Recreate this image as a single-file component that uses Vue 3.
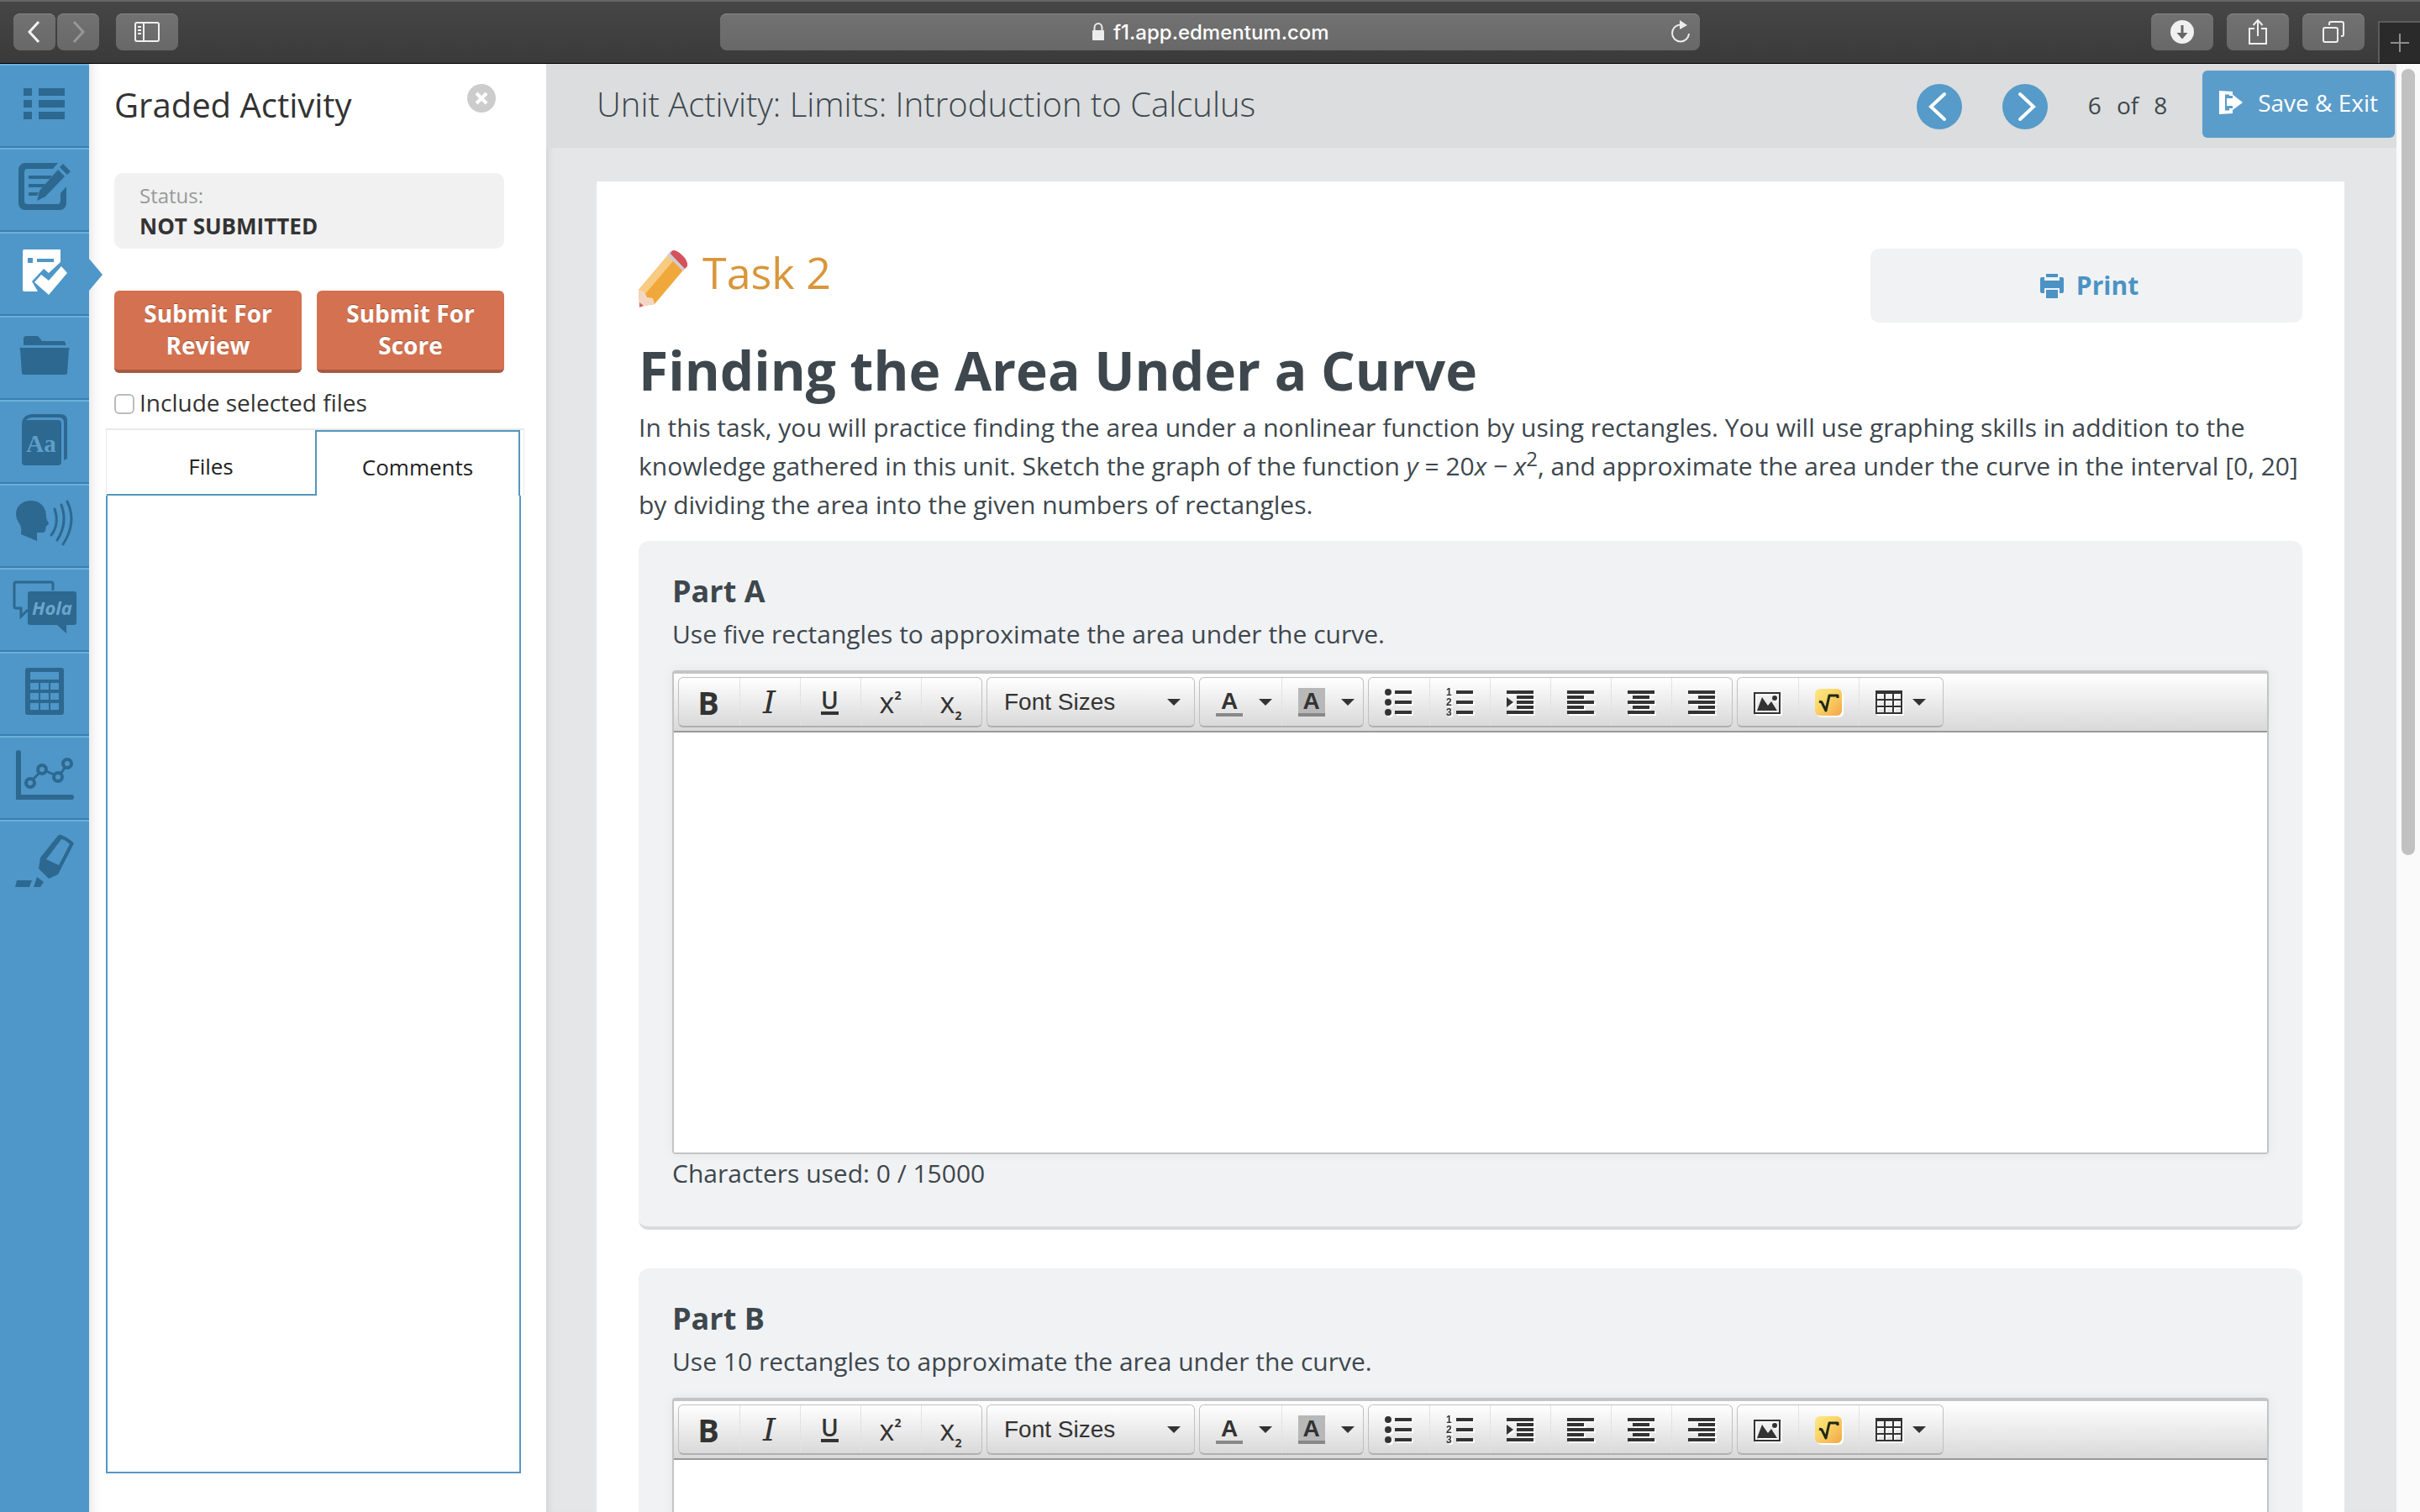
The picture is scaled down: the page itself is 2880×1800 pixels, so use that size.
<script setup>
import { ref } from 'vue'

const address = ref('f1.app.edmentum.com')
const includeFiles = ref(false)
const tools = [
  { id: 'contents', label: 'Contents' },
  { id: 'notes', label: 'Notes' },
  { id: 'graded', label: 'Graded Activity', active: true },
  { id: 'files', label: 'Files' },
  { id: 'dictionary', label: 'Dictionary' },
  { id: 'speech', label: 'Text to Speech' },
  { id: 'translate', label: 'Translate' },
  { id: 'calculator', label: 'Calculator' },
  { id: 'graph', label: 'Graph' },
  { id: 'highlighter', label: 'Highlighter' },
]
const parts = ref([
  { name: 'Part A', prompt: 'Use five rectangles to approximate the area under the curve.', answer: '' },
  { name: 'Part B', prompt: 'Use 10 rectangles to approximate the area under the curve.', answer: '' },
])
const listTools = [
  { label: 'Bullet list', d: 'M6 1h10v2H6zM6 7h10v2H6zM6 13h10v2H6zM2 0a2 2 0 1 1 0 4a2 2 0 1 1 0-4M2 6a2 2 0 1 1 0 4a2 2 0 1 1 0-4M2 12a2 2 0 1 1 0 4a2 2 0 1 1 0-4' },
  { label: 'Numbered list', d: 'M6 1h10v2H6zM6 7h10v2H6zM6 13h10v2H6z', numbers: true },
  { label: 'Increase indent', d: 'M0 1h16v2H0zM6 4h10v2H6zM6 7h10v2H6zM6 10h10v2H6zM0 13h16v2H0zM0 5l4 3l-4 3z' },
  { label: 'Align left', d: 'M0 1h16v2H0zM0 4h10v2H0zM0 7h16v2H0zM0 10h10v2H0zM0 13h16v2H0z' },
  { label: 'Align center', d: 'M0 1h16v2H0zM3 4h10v2H3zM0 7h16v2H0zM3 10h10v2H3zM0 13h16v2H0z' },
  { label: 'Align right', d: 'M0 1h16v2H0zM6 4h10v2H6zM0 7h16v2H0zM6 10h10v2H6zM0 13h16v2H0z' },
]
</script>

<template>
  <div class="window">
    <header class="browser-bar">
      <div class="history">
        <button class="chrome-btn small" aria-label="Back">
          <svg width="20" height="30" viewBox="0 0 20 30"><path d="M15 3L4 15l11 12" fill="none" stroke="#f2f2f2" stroke-width="3" /></svg>
        </button>
        <button class="chrome-btn small" aria-label="Forward">
          <svg width="20" height="30" viewBox="0 0 20 30"><path d="M5 3l11 12L5 27" fill="none" stroke="#979797" stroke-width="3" /></svg>
        </button>
      </div>
      <button class="chrome-btn" aria-label="Sidebar">
        <svg width="30" height="24" viewBox="0 0 30 24" fill="none" stroke="#f0f0f0" stroke-width="2">
          <rect x="1" y="1" width="28" height="22" rx="2" /><path d="M11 1v22M4 6h4M4 10h4M4 14h4" />
        </svg>
      </button>
      <div class="address">
        <svg class="lock" width="16" height="24" viewBox="0 0 16 24"><path d="M3.500 12V7a4.500 5 0 0 1 9 0v5" fill="none" stroke="#ececec" stroke-width="2" /><rect x="1" y="10" width="14" height="12" rx="1" fill="#ececec" /></svg>
        <input v-model="address" class="url" aria-label="Address" />
        <button class="reload" aria-label="Reload">
          <svg width="26" height="30" viewBox="0 0 26 30"><path d="M12 6.500A10 10 0 1 0 23 17" fill="none" stroke="#ececec" stroke-width="2" /><path d="M12 1l9 6l-9 5z" fill="#ececec" /></svg>
        </button>
      </div>
      <div class="chrome-actions">
        <button class="chrome-btn" aria-label="Downloads">
          <svg width="30" height="30" viewBox="0 0 30 30"><circle cx="15" cy="15" r="14" fill="#f0f0f0" /><path d="M13.500 7h3v9h5L15 23.500L8.500 16h5z" fill="#666" /></svg>
        </button>
        <button class="chrome-btn" aria-label="Share">
          <svg width="24" height="32" viewBox="0 0 24 32" fill="none" stroke="#f0f0f0" stroke-width="2"><path d="M8 12H2v18h20V12h-6M12 21V2M6.500 8L12 2l5.500 6" /></svg>
        </button>
        <button class="chrome-btn" aria-label="Show tabs">
          <svg width="26" height="26" viewBox="0 0 26 26" fill="none" stroke="#f0f0f0" stroke-width="2"><rect x="1" y="8" width="17" height="17" rx="2" /><path d="M8 5V3a2 2 0 0 1 2-2h13a2 2 0 0 1 2 2v13a2 2 0 0 1-2 2h-1" /></svg>
        </button>
      </div>
      <button class="new-tab" aria-label="New tab">
        <svg width="24" height="24" viewBox="0 0 24 24"><path d="M12 1v22M1 12h22" stroke="#8d8d8d" stroke-width="2" /></svg>
      </button>
    </header>

    <div class="workspace">
      <nav class="rail" aria-label="Tools">
        <button v-for="tool in tools" :key="tool.id" class="rail-item" :class="{ active: tool.active }" :aria-label="tool.label">
          <svg width="106" height="96" viewBox="0 2 106 96" fill="currentColor">
            <g v-if="tool.id === 'contents'">
              <path d="M28 29h10v9H28zM46 29h31v9H46zM28 43h10v9H28zM46 43h31v9H46zM28 57h10v9H28zM46 57h31v9H46z" />
            </g>
            <g v-else-if="tool.id === 'notes'">
              <path d="M69 18H30a8 8 0 0 0-8 8v40a8 8 0 0 0 8 8h41a8 8 0 0 0 8-8V46l-7 8v9a4 4 0 0 1-4 4H33a4 4 0 0 1-4-4V29a4 4 0 0 1 4-4h30z" />
              <path d="M34 33h28l-3 4H34zM34 43h20l-3 4H34zM34 53h12l-2 4H34z" />
              <path d="M47 51L69 26l8 8L54 58l-10 5zM71 23l4-4l9 9l-4 4z" />
            </g>
            <g v-else-if="tool.id === 'graded'">
              <path d="M29 21h43v15L58 49l-6-5l-14 15l7 12H29a2 2 0 0 1-2-2V23a2 2 0 0 1 2-2z" />
              <path d="M33 31h6v6h-6zM44 32h20v4H44z" fill="#4e97c8" />
              <path d="M41 60l8-9l9 7l15-17l7 8l-22 26z" />
            </g>
            <g v-else-if="tool.id === 'files'">
              <path d="M30 24h15l5 6h25a3 3 0 0 1 3 3v2H28v-9zM25 38h56a1 1 0 0 1 1 2l-2 28a2 2 0 0 1-2 2H28a2 2 0 0 1-2-2l-2-28a1 1 0 0 1 1-2z" />
            </g>
            <g v-else-if="tool.id === 'dictionary'">
              <path d="M26 30q0-12 12-13h34q8 0 8 8v45l-4 2V27q0-6-6-6H40q-6 0-9 3h38q4 0 4 4v46q0 4-4 4H30q-4 0-4-4z" />
              <text x="49" y="62" class="book-text">Aa</text>
            </g>
            <g v-else-if="tool.id === 'speech'">
              <path d="M37 20c12 0 18 9 18 19c0 3 2 6 3 8q0 2-3 3c-1 4 0 7-4 8h-7v10L25 60q1-7-1-11c-3-5-5-8-5-13c0-10 8-16 18-16z" />
              <path d="M65 30q6 18-4 31M73 25q8 22-5 42M80 21q12 25-5 51" fill="none" stroke="currentColor" stroke-width="3" stroke-linecap="round" />
            </g>
            <g v-else-if="tool.id === 'translate'">
              <path d="M63 27V19q0-2-2-2H19q-2 0-2 2v27q0 2 2 2h6v10l8-8" fill="none" stroke="currentColor" stroke-width="3" />
              <path d="M36 28h52q3 0 3 3v34q0 3-3 3h-9v10L68 68H36q-3 0-3-3V31q0-3 3-3z" />
              <text x="62" y="56" class="hola-text">Hola</text>
            </g>
            <g v-else-if="tool.id === 'calculator'">
              <path fill-rule="evenodd" d="M33 19h40q3 0 3 3v50q0 3-3 3H33q-3 0-3-3V22q0-3 3-3zM36 24v9h34v-9zM36 37v8h10v-8zM48 37v8h10v-8zM60 37v8h10v-8zM36 49v8h10v-8zM48 49v8h10v-8zM60 49v8h10v-8zM36 61v8h10v-8zM48 61v8h10v-8zM60 61v8h10v-8z" />
            </g>
            <g v-else-if="tool.id === 'graph'" fill="none" stroke="currentColor">
              <path d="M22 20v53h63" stroke-width="6" stroke-linecap="round" />
              <path d="M39 52l8-8M55 42l9 4M73 44l4-6" stroke-width="3" />
              <circle v-for="point in [[36, 56], [50, 40], [69, 49], [80, 33]]" :key="point[0]" :cx="point[0]" :cy="point[1]" r="5" stroke-width="4" />
            </g>
            <g v-else>
              <path d="M73 17q8 3 15 10L69 64l-11 5l-12-12l2-13L68 19q2-3 5-2zM73 22L55 46l15 7l13-25q-5-5-10-6z" fill-rule="evenodd" />
              <path d="M44 67l8 6l-4 6h-8zM20 71h18l-3 8H18z" />
            </g>
          </svg>
        </button>
      </nav>

      <aside class="panel">
        <div class="panel-head">
          <h2>Graded Activity</h2>
          <button class="close" aria-label="Close">
            <svg width="34" height="34" viewBox="0 0 34 34"><circle cx="17" cy="17" r="17" fill="#ccc" /><path d="M11 11l12 12M23 11L11 23" stroke="#fff" stroke-width="4" /></svg>
          </button>
        </div>
        <div class="status">
          <span class="status-label">Status:</span>
          <strong>NOT SUBMITTED</strong>
        </div>
        <div class="submit-row">
          <button>Submit For Review</button>
          <button>Submit For Score</button>
        </div>
        <label class="include"><input v-model="includeFiles" type="checkbox" /> Include selected files</label>
        <div class="tabs" role="tablist">
          <button class="tab" role="tab">Files</button>
          <button class="tab selected" role="tab" aria-selected="true">Comments</button>
        </div>
        <div class="tab-body" role="tabpanel"></div>
      </aside>

      <main class="content">
        <div class="activity-bar">
          <h1>Unit Activity: Limits: Introduction to Calculus</h1>
          <div class="pager">
            <button aria-label="Previous"><svg width="54" height="54" viewBox="0 0 54 54"><path d="M33 12L17 27l16 15" fill="none" stroke="#fff" stroke-width="4" stroke-linecap="round" /></svg></button>
            <button aria-label="Next"><svg width="54" height="54" viewBox="0 0 54 54"><path d="M21 12l16 15l-16 15" fill="none" stroke="#fff" stroke-width="4" stroke-linecap="round" /></svg></button>
            <span class="count"><span>6</span><span>of</span><span>8</span></span>
          </div>
          <button class="save">
            <svg width="28" height="28" viewBox="0 0 28 28" fill="#fff"><path d="M0 0l16 1v5h-4V4.500H7v19h5V21h4v6L0 28z" /><path d="M9 9h7V4.500L28 14L16 23v-5H9z" /></svg>
            Save &amp; Exit
          </button>
        </div>

        <article class="page">
          <div class="task-row">
            <div class="task">
              <svg width="58" height="68" viewBox="0 0 58 68">
                <path d="M0 47L38 2l19 17L19 64L1 67z" fill="#f1a83a" />
                <path d="M0 47L38 2l7 6L7 53z" fill="#f8cb83" />
                <path d="M0 47l7 3l3 6l7 1l2 7L1 67z" fill="#f3d7c4" />
                <path d="M34 6l4-5l20 17l-5 7z" fill="#cfcdd2" />
                <path d="M39 1q4-3 12 4t7 14l-3 3L38 4z" fill="#d4525a" />
                <path d="M1 62l5 4l-5 2z" fill="#cf6670" />
              </svg>
              <h3>Task 2</h3>
            </div>
            <button class="print">
              <svg width="30" height="30" viewBox="0 0 30 30" fill="#4b93c4"><path d="M8 1h14v4H8zM3 5h3v4h18V5h3q2 0 2 2v15q0 2-2 2h-3v-6H6v6H3q-2 0-2-2V7q0-2 2-2zM8 20h14v10H8z" /></svg>
              Print
            </button>
          </div>
          <h2 class="title">Finding the Area Under a Curve</h2>
          <p class="intro">In this task, you will practice finding the area under a nonlinear function by using rectangles. You will use graphing skills in addition to the knowledge gathered in this unit. Sketch the graph of the function <em>y</em> = 20<em>x</em> − <em>x</em><sup>2</sup>, and approximate the area under the curve in the interval [0, 20] by dividing the area into the given numbers of rectangles.</p>

          <section v-for="part in parts" :key="part.name" class="part">
            <h3>{{ part.name }}</h3>
            <p>{{ part.prompt }}</p>
            <div class="editor">
              <div class="toolbar">
                <div class="group">
                  <button aria-label="Bold"><b class="bold">B</b></button>
                  <button aria-label="Italic"><i class="italic">I</i></button>
                  <button aria-label="Underline"><span class="underline">U</span></button>
                  <button aria-label="Superscript"><span class="script">x<sup>2</sup></span></button>
                  <button aria-label="Subscript"><span class="script">x<sub>2</sub></span></button>
                </div>
                <div class="group sizes">
                  <select aria-label="Font Sizes"><option>Font Sizes</option></select>
                  <span class="caret"></span>
                </div>
                <div class="group colors">
                  <button aria-label="Text color"><span class="letter">A</span><span class="caret"></span></button>
                  <button aria-label="Background color"><span class="letter filled">A</span><span class="caret"></span></button>
                </div>
                <div class="group">
                  <button v-for="item in listTools" :key="item.label" :aria-label="item.label">
                    <svg width="32" height="32" viewBox="0 0 16 16" fill="#333">
                      <path :d="item.d" />
                      <g v-if="item.numbers" class="numbers"><text x="0" y="4">1</text><text x="0" y="10">2</text><text x="0" y="16">3</text></g>
                    </svg>
                  </button>
                </div>
                <div class="group">
                  <button aria-label="Insert image">
                    <svg width="32" height="32" viewBox="0 0 16 16" fill="#333"><path fill-rule="evenodd" d="M0 2h16v13H0zM1 3v11h14V3z" /><path d="M2 13l3-8l3.500 5l2-2.500L14 13z" /><circle cx="12.500" cy="5.500" r="1.500" /></svg>
                  </button>
                  <button aria-label="Insert equation">
                    <svg width="32" height="32" viewBox="0 0 32 32">
                      <defs><linearGradient id="equation-fill" x1="0" y1="0" x2="1" y2="1"><stop offset="0" stop-color="#fbe88c" /><stop offset="0.4" stop-color="#fbd768" /><stop offset="1" stop-color="#f2a548" /></linearGradient></defs>
                      <rect width="32" height="32" rx="6" fill="url(#equation-fill)" />
                      <path d="M5 15l3 1l5 10l4-18h10v3" fill="none" stroke="#1d2a14" stroke-width="3" stroke-linejoin="round" />
                    </svg>
                  </button>
                  <button class="table-btn" aria-label="Table">
                    <svg width="32" height="32" viewBox="0 0 16 16" fill="#333"><path fill-rule="evenodd" d="M0 1h16v14H0zM1 3v3h4V3zM6 3v3h4V3zM11 3v3h4V3zM1 7v3h4V7zM6 7v3h4V7zM11 7v3h4V7zM1 11v3h4v-3zM6 11v3h4v-3zM11 11v3h4v-3z" /></svg>
                    <span class="caret"></span>
                  </button>
                </div>
              </div>
              <textarea v-model="part.answer" :aria-label="part.name + ' answer'"></textarea>
            </div>
            <p class="used">Characters used: {{ part.answer.length }} / 15000</p>
          </section>
        </article>
      </main>

      <div class="scrollbar"><div class="thumb"></div></div>
    </div>
  </div>
</template>

<style>
body {
  margin: 0;
  background: #e5e6e8;
}
</style>

<style scoped>
* {
  box-sizing: border-box;
}
h1,
h2,
h3,
p {
  margin: 0;
}
button {
  margin: 0;
  padding: 0;
  border: 0;
  background: none;
  font: inherit;
  color: inherit;
}
svg {
  display: block;
  flex: none;
  overflow: visible;
}
.window {
  display: flex;
  flex-direction: column;
  height: 100vh;
  overflow: hidden;
  font-family: 'Open Sans', sans-serif;
  color: #3d474d;
}

/* browser chrome */
.browser-bar {
  display: grid;
  grid-template-columns: auto auto 1fr auto auto;
  align-items: start;
  flex: none;
  height: 76px;
  padding: 14px 0 0 16px;
  border-top: 2px solid #666;
  border-bottom: 1px solid #000;
  background: linear-gradient(#464646, #3a3a3a);
}
.history {
  display: flex;
  gap: 2px;
  margin-right: 20px;
}
.chrome-btn {
  display: flex;
  align-items: center;
  justify-content: center;
  width: 74px;
  height: 44px;
  border-radius: 8px;
  background: linear-gradient(#727272, #686868);
  box-shadow: inset 0 1px #858585;
}
.chrome-btn.small {
  width: 50px;
}
.address {
  display: flex;
  align-items: center;
  justify-self: center;
  justify-content: center;
  position: relative;
  width: 1166px;
  max-width: 100%;
  height: 44px;
  margin-left: 108px;
  border-radius: 8px;
  background: linear-gradient(#727272, #686868);
  box-shadow: inset 0 1px #858585;
}
.lock {
  margin-right: 10px;
}
.url {
  width: 256px;
  height: 34px;
  padding: 0;
  border: 0;
  background: none;
  font: 500 24px Inter, sans-serif;
  color: #fff;
}
.reload {
  position: absolute;
  top: 7px;
  right: 10px;
}
.chrome-actions {
  display: flex;
  gap: 16px;
}
.new-tab {
  display: flex;
  align-items: center;
  justify-content: center;
  align-self: end;
  width: 50px;
  height: 50px;
  margin-left: 16px;
  border: solid #5c5c5c;
  border-width: 2px 0 0 2px;
  background: #2a2a2a;
}

.workspace {
  display: flex;
  flex: 1;
  min-height: 0;
}

/* tool rail */
.rail {
  display: flex;
  flex-direction: column;
  flex: none;
  position: relative;
  z-index: 1;
  width: 106px;
  background: #4e97c8;
  color: #2d6890;
}
.rail-item {
  position: relative;
  height: 100px;
  border-top: 2px solid #6dafda;
  border-bottom: 2px solid #3a7fb0;
}
.rail-item:last-child {
  border-bottom: 0;
}
.rail-item.active {
  color: #fff;
}
.rail-item.active::after {
  content: '';
  position: absolute;
  top: 30px;
  left: 106px;
  border: solid transparent;
  border-width: 19px 0 19px 16px;
  border-left-color: #4e97c8;
}
.book-text {
  font: bold 29px 'Liberation Serif', serif;
  fill: #5e9fcb;
  text-anchor: middle;
}
.hola-text {
  font: italic bold 22px 'Open Sans', sans-serif;
  fill: #6aa5cd;
  text-anchor: middle;
}

/* graded activity panel */
.panel {
  display: flex;
  flex-direction: column;
  flex: none;
  width: 544px;
  padding: 20px 30px 46px 20px;
  background: #fff;
  box-shadow: inset 16px 0 14px -14px #dfdfe2;
  color: #333;
}
.panel-head {
  display: flex;
  justify-content: space-between;
  align-items: flex-start;
  margin: 0 30px 52px 10px;
}
.panel-head h2 {
  font-size: 40px;
  font-weight: 400;
  line-height: 58px;
}
.close {
  margin-top: 4px;
}
.status {
  display: flex;
  flex-direction: column;
  margin: 0 20px 50px 10px;
  padding: 9px 30px;
  border-radius: 10px;
  background: #f1f1f1;
  font-size: 26px;
  line-height: 36px;
}
.status-label {
  font-size: 24px;
  color: #999;
}
.submit-row {
  display: flex;
  gap: 18px;
  margin: 0 20px 16px 10px;
}
.submit-row button {
  flex: 1;
  padding: 8px 30px 10px;
  border-bottom: 4px solid #a85940;
  border-radius: 6px;
  background: #d37150;
  font-size: 28px;
  font-weight: 700;
  line-height: 38px;
  color: #fff;
  text-shadow: 0 -1px rgba(0, 0, 0, 0.3);
}
.include {
  display: flex;
  align-items: center;
  gap: 6px;
  margin: 0 0 12px 10px;
  font-size: 28px;
  line-height: 38px;
}
.include input {
  appearance: none;
  width: 24px;
  height: 24px;
  margin: 4px 0 0;
  border: 2px solid #bbb;
  border-radius: 6px;
  background: #fff;
}
.tabs {
  display: flex;
  flex: none;
  height: 80px;
  margin-right: -4px;
  padding-right: 4px;
  border: solid #e9e9e9;
  border-width: 2px 1px 0;
}
.tab {
  width: 248px;
  padding-top: 10px;
  border-bottom: 2px solid #5596bf;
  font-size: 26px;
  color: #222;
}
.tab.selected {
  flex: 1;
  padding-top: 8px;
  border: solid #5596bf;
  border-width: 2px 2px 0;
}
.tab-body {
  flex: 1;
  border: solid #5596c6;
  border-width: 0 2px 2px;
}

/* activity content */
.content {
  flex: 1;
  min-width: 0;
  overflow: hidden;
  background: #e5e6e8;
  box-shadow: inset 8px 0 8px -6px #cfd0d2;
}
.activity-bar {
  display: flex;
  align-items: center;
  height: 100px;
  padding: 0 2px 4px 60px;
  background: #dbddde;
}
.activity-bar h1 {
  flex: 1;
  font-size: 40px;
  font-weight: 300;
  line-height: 56px;
}
.pager {
  display: flex;
  align-items: center;
  gap: 48px;
  padding-top: 6px;
}
.pager button {
  border-radius: 50%;
  background: #569bc9;
}
.count {
  display: flex;
  gap: 18px;
  margin-right: 42px;
  padding-bottom: 4px;
  font-size: 28px;
  line-height: 38px;
}
.save {
  display: flex;
  align-items: center;
  gap: 18px;
  height: 80px;
  padding: 0 20px 4px 20px;
  border-radius: 6px;
  background: #5b9dca;
  font-size: 28px;
  color: #fff;
}
.page {
  margin: 40px 62px 0 60px;
  padding: 80px 50px 0;
  background: #fff;
  font-size: 30px;
  line-height: 46px;
}
.task-row {
  display: flex;
  justify-content: space-between;
  align-items: flex-start;
  margin-bottom: 18px;
}
.task {
  display: flex;
  align-items: flex-start;
  gap: 18px;
}
.task svg {
  margin-top: 2px;
}
.task h3 {
  font-size: 52px;
  font-weight: 400;
  line-height: 56px;
  color: #d9963a;
}
.print {
  display: flex;
  align-items: center;
  justify-content: center;
  gap: 14px;
  width: 514px;
  height: 88px;
  padding-left: 6px;
  border-radius: 10px;
  background: #f1f2f4;
  font-weight: 700;
  color: #4b93c4;
}
.title {
  margin-bottom: 6px;
  font-size: 64px;
  font-weight: 700;
  line-height: 78px;
}
.intro {
  margin-bottom: 20px;
}
.intro sup {
  font-size: 24px;
  line-height: 0;
}
.part {
  margin-bottom: 46px;
  padding: 36px 40px 40px;
  border-bottom: 4px solid #d8dcdc;
  border-radius: 12px;
  background: #f1f2f4;
}
.part h3 {
  margin-bottom: 4px;
  font-size: 36px;
  font-weight: 700;
  line-height: 48px;
}

/* rich text editor */
.editor {
  margin-top: 20px;
  border: 2px solid #c4c4c4;
  border-top-width: 4px;
  border-radius: 4px;
  box-shadow: 0 0 14px rgba(0, 0, 0, 0.06);
  font-family: 'Liberation Sans', sans-serif;
  color: #333;
}
.toolbar {
  display: flex;
  gap: 5px;
  height: 70px;
  padding: 4px 5px;
  border-bottom: 2px solid #9a9a9a;
  background: linear-gradient(#fff, #d9d9d9);
}
.group {
  display: flex;
  position: relative;
  height: 60px;
  border: 1px solid #c0c0c0;
  border-bottom: 2px solid #b0b0b0;
  border-radius: 6px;
  background: linear-gradient(#fff, #d9d9d9);
  text-shadow: 2px 2px #fff;
}
.group button {
  display: flex;
  align-items: center;
  justify-content: center;
  width: 72px;
  padding-right: 2px;
  line-height: 32px;
}
.group button + button {
  border-left: 1px solid #e2e2e2;
}
.group svg {
  filter: drop-shadow(2px 2px #fff);
}
.bold {
  font-family: 'Open Sans', sans-serif;
  font-size: 38px;
}
.italic {
  font-family: 'DejaVu Serif', serif;
  font-size: 38px;
}
.underline {
  padding-bottom: 2px;
  border-bottom: 4px solid #333;
  font-family: 'Open Sans', sans-serif;
  font-size: 28px;
  font-weight: 600;
  line-height: 24px;
}
.script {
  font-family: 'Open Sans', sans-serif;
  font-size: 34px;
}
.script sup,
.script sub {
  font-size: 14px;
  font-weight: 700;
  line-height: 0;
}
.script sup {
  vertical-align: 16px;
}
.script sub {
  vertical-align: -8px;
}
.sizes {
  align-items: center;
  width: 248px;
}
.sizes select {
  appearance: none;
  width: 100%;
  height: 100%;
  padding: 0 20px;
  border: 0;
  background: none;
  font: 28px 'Liberation Sans', sans-serif;
  color: inherit;
}
.caret {
  border: solid transparent;
  border-width: 8px 8px 0;
  border-top-color: #333;
}
.sizes .caret {
  position: absolute;
  right: 16px;
}
.colors button {
  width: 97px;
  gap: 19px;
  padding: 0 0 0 8px;
}
.letter {
  width: 32px;
  padding-top: 2px;
  border-bottom: 4px solid #888;
  font-size: 28px;
  font-weight: 700;
  line-height: 28px;
}
.letter.filled {
  background: #b8b8b8;
  text-shadow: none;
}
.numbers {
  font: bold 6px 'Liberation Sans', sans-serif;
}
.group .table-btn {
  width: 100px;
  gap: 12px;
}
textarea {
  display: block;
  width: 100%;
  height: 500px;
  padding: 16px;
  border: 0;
  background: #fff;
  font: 28px 'Open Sans', sans-serif;
  resize: none;
}

.scrollbar {
  flex: none;
  width: 28px;
  padding: 6px;
  background: #fafafa;
}
.thumb {
  width: 16px;
  height: calc(55% - 6px);
  border-radius: 8px;
  background: #c1c1c1;
}
</style>
